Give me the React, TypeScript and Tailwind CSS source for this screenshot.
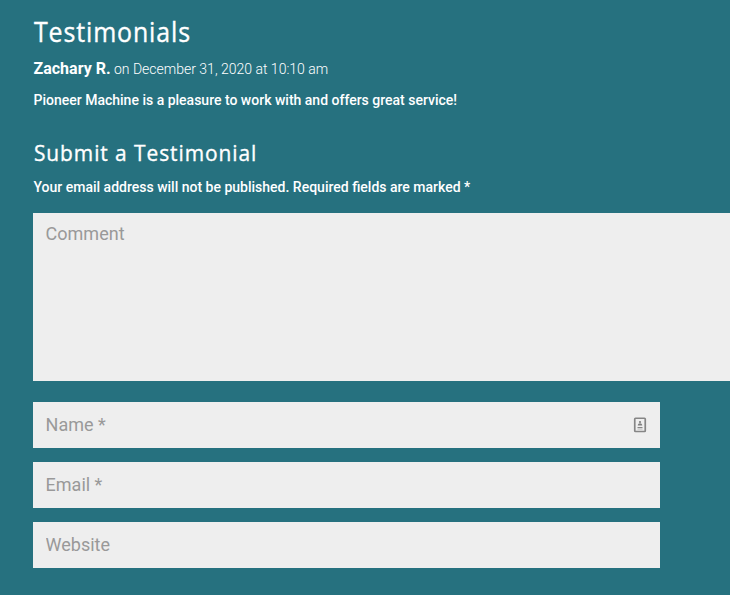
import React from "react";

interface FieldProps {
  name: string;
  placeholder: string;
  children?: React.ReactNode;
}

const Field: React.FC<FieldProps> = ({ name, placeholder, children }) => {
  return (
    <div className="flex items-center w-[627px] h-[46px] pl-[12.6px] pr-[13px] bg-[#eeeeee]">
      <input
        className="flex-1 bg-transparent text-lg text-gray-700 placeholder:text-[#999999] outline-none"
        name={name}
        placeholder={placeholder}
      />
      {children}
    </div>
  );
};

const ContactIcon: React.FC = () => {
  return (
    <svg width="14" height="16" viewBox="0 0 14 16" fill="none">
      <rect x="1.75" y="1.25" width="10.5" height="13.25" rx="0.75" stroke="#858585" strokeWidth="1.7" />
      <circle cx="7" cy="5" r="1.1" fill="#7d7d7d" />
      <path d="M4.75 8.5C4.75 7 6 6.3 7 6.3C8 6.3 9.25 7 9.25 8.5Z" fill="#7d7d7d" />
      <path d="M4.5 10.5H9.5" stroke="#858585" />
      <path d="M4.5 12H9.5" stroke="#b5b5b5" />
    </svg>
  );
};

const App: React.FC = () => {
  return (
    <main className="h-[595px] overflow-hidden bg-[#26717f] pl-[33px] pt-4 text-white font-[Roboto,sans-serif]">
      <h1 className="pl-px text-[27.5px] leading-8 tracking-[1px] origin-left scale-x-[0.905] [-webkit-text-stroke:0.35px_white] font-['Open_Sans',sans-serif]">
        Testimonials
      </h1>
      <p className="mt-[9px] pl-[0.5px] text-sm leading-6 font-light">
        <span className="text-base font-bold">Zachary R.</span> on December 31, 2020 at 10:10 am
      </p>
      <p className="mt-[7px] pl-[0.5px] text-sm leading-6 font-medium">
        Pioneer Machine is a pleasure to work with and offers great service!
      </p>
      <h2 className="mt-[27px] pl-px text-[22.5px] leading-7 tracking-[1px] origin-left scale-x-[0.93] [-webkit-text-stroke:0.35px_white] font-['Open_Sans',sans-serif]">
        Submit a Testimonial
      </h2>
      <p className="mt-2 pl-[0.5px] text-sm leading-6 font-medium">
        Your email address will not be published. Required fields are marked *
      </p>
      <form className="mt-[14px]">
        <textarea
          className="block w-[720px] h-[168px] px-[12.6px] py-[7px] bg-[#eeeeee] text-lg text-gray-700 placeholder:text-[#999999] resize-none outline-none"
          name="comment"
          placeholder="Comment"
        />
        <div className="mt-[21px] flex flex-col gap-[14px]">
          <Field name="author" placeholder="Name *">
            <ContactIcon />
          </Field>
          <Field name="email" placeholder="Email *" />
          <Field name="url" placeholder="Website" />
        </div>
      </form>
    </main>
  );
};

export default App;
